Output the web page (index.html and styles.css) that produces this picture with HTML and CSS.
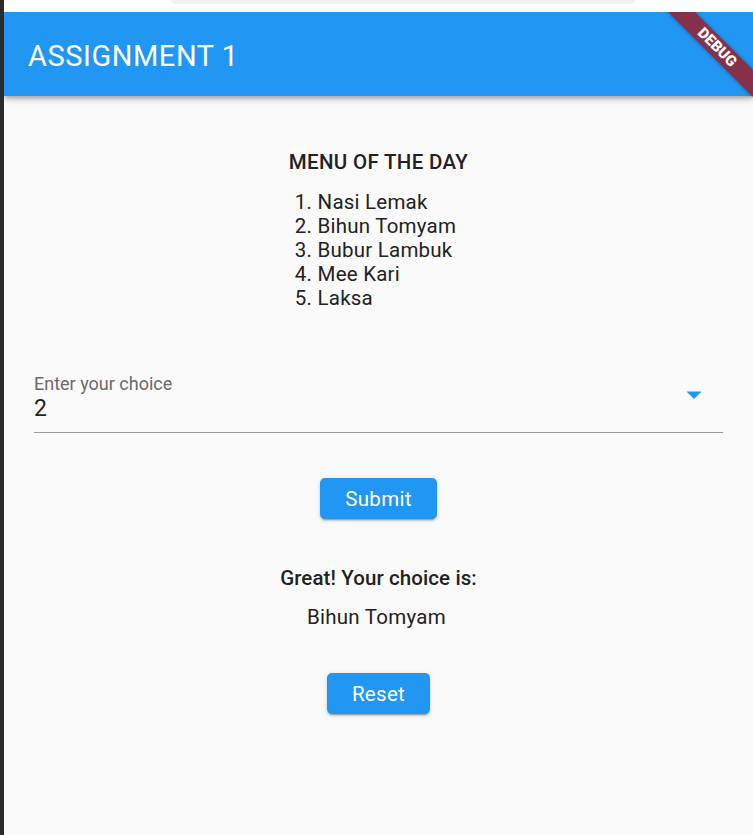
FILE: index.html
```html
<!DOCTYPE html>
<html lang="en">
<head>
<meta charset="utf-8">
<title>Assignment 1</title>
<link rel="stylesheet" href="styles.css">
</head>
<body>
<div class="screen">
  <div class="side"></div>
  <div class="main">
    <div class="chrome"><div class="pill"></div></div>
    <div class="app">
      <header class="appbar"><h1 class="title">ASSIGNMENT 1</h1></header>
      <main class="content">
        <h2 class="menu-title">MENU OF THE DAY</h2>
        <ol class="menu-list">
          <li>1. Nasi Lemak</li>
          <li>2. Bihun Tomyam</li>
          <li>3. Bubur Lambuk</li>
          <li>4. Mee Kari</li>
          <li>5. Laksa</li>
        </ol>
        <div class="field">
          <div class="field-text">
            <div class="label">Enter your choice</div>
            <div class="value">2</div>
          </div>
          <svg class="arrow" viewBox="0 0 34 34" width="34" height="34"><path d="M9.5 13.5H24.5L17 21Z" fill="#2196F3"/></svg>
        </div>
        <button class="btn">Submit</button>
        <p class="result-title">Great! Your choice is:</p>
        <p class="result">Bihun Tomyam</p>
        <button class="btn">Reset</button>
      </main>
      <div class="debug"><span>DEBUG</span></div>
    </div>
  </div>
</div>
</body>
</html>
```

FILE: styles.css
```css
html, body {
  margin: 0;
  padding: 0;
  height: 100%;
}
body {
  background: #2b2b2b;
  font-family: Roboto, "Noto Sans", Arial, sans-serif;
  overflow: hidden;
}
.screen {
  display: flex;
  height: 835px;
}
.side {
  width: 4px;
  flex: none;
  background: #2b2b2b;
}
.main {
  flex: 1;
  display: flex;
  flex-direction: column;
  min-width: 0;
}
.chrome {
  height: 12px;
  flex: none;
  background: #ffffff;
  padding-left: 167px;
}
.pill {
  width: 464px;
  height: 4px;
  background: #f0f1f3;
  border-radius: 0 0 10px 10px;
}
.app {
  flex: 1;
  position: relative;
  overflow: hidden;
  background: #fafafa;
  display: flex;
  flex-direction: column;
}
.appbar {
  height: 84px;
  flex: none;
  background: #2196f3;
  display: flex;
  align-items: center;
  padding: 3px 24px 0;
  box-sizing: border-box;
  box-shadow: 0 2px 4px -1px rgba(0,0,0,0.2), 0 4px 5px 0 rgba(0,0,0,0.14), 0 1px 10px 0 rgba(0,0,0,0.12);
  position: relative;
  z-index: 1;
}
.title {
  margin: 0;
  color: #ffffff;
  font-size: 29px;
  font-weight: 400;
  letter-spacing: 0.55px;
  line-height: 32px;
}
.content {
  display: flex;
  flex-direction: column;
  align-items: center;
  padding: 54px 30px 0;
  color: #222222;
}
.menu-title {
  margin: 0 0 16px;
  font-size: 20.5px;
  font-weight: 500;
  letter-spacing: 0.33px;
  line-height: 24px;
}
.menu-list {
  list-style: none;
  margin: 0 6px 0 0;
  padding: 0;
  font-size: 20.5px;
  letter-spacing: 0.22px;
  line-height: 24px;
}
.field {
  align-self: stretch;
  display: flex;
  align-items: flex-start;
  margin-top: 63px;
  padding-bottom: 9px;
  border-bottom: 1px solid #9a9a9a;
}
.field-text {
  flex: 1;
}
.label {
  font-size: 18px;
  line-height: 20px;
  padding-top: 1px;
  margin-bottom: -1px;
  color: #6a6a6a;
}
.value {
  margin-top: 2px;
  font-size: 23px;
  line-height: 28px;
  color: #222222;
}
.arrow {
  flex: none;
  margin: 5px 12px 0 0;
}
.btn {
  box-sizing: border-box;
  height: 41px;
  margin-top: 45px;
  padding: 2px 25px 0;
  border: none;
  border-radius: 5px;
  background: #2196f3;
  color: #ffffff;
  font-family: Roboto, "Noto Sans", Arial, sans-serif;
  font-size: 20.5px;
  font-weight: 400;
  letter-spacing: 0.3px;
  line-height: 39px;
  box-shadow: 0 3px 1px -2px rgba(0,0,0,0.2), 0 2px 2px 0 rgba(0,0,0,0.14), 0 1px 5px 0 rgba(0,0,0,0.12);
}
.result-title {
  margin: 47px 0 0;
  font-size: 20.5px;
  font-weight: 500;
  letter-spacing: 0.1px;
  line-height: 24px;
}
.result {
  margin: 15px 4px 0 0;
  font-size: 20.5px;
  letter-spacing: 0.25px;
  line-height: 24px;
}
.result + .btn {
  margin-top: 44px;
}
.debug {
  position: absolute;
  left: 653px;
  top: 25.5px;
  width: 120px;
  height: 19px;
  background: #86304b;
  transform: rotate(45deg);
  box-shadow: 0 0 4px rgba(0,0,0,0.35);
  display: flex;
  align-items: center;
  justify-content: center;
  z-index: 2;
}
.debug span {
  color: #ffffff;
  font-size: 15px;
  font-weight: 900;
  line-height: 15px;
}
```
